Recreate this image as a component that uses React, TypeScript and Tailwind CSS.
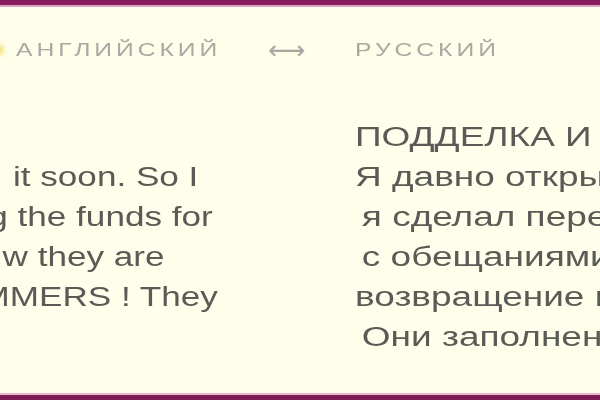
export default function App() {
  const leftLines = [
    { text: 'it soon. So I', cls: 'ml-[10px]' },
    { text: 'g the funds for', cls: '-ml-[9px]' },
    { text: 'w they are', cls: 'ml-[2px]' },
    { text: 'MMERS ! They', cls: '-ml-[15px]' },
  ];
  const rightLines = [
    { text: 'ПОДДЕЛКА И МОШЕННИКИ', cls: '' },
    { text: 'Я давно открыл счет в этой компании,', cls: '' },
    { text: 'я сделал перевод средств', cls: 'pl-[5px]' },
    { text: 'с обещаниями на', cls: 'pl-[5px]' },
    { text: 'возвращение моих денег.', cls: '' },
    { text: 'Они заполнены', cls: 'pl-[5px]' },
  ];

  return (
    <div className="w-[600px] h-[400px] flex flex-col bg-[#fefeea] overflow-hidden font-['Liberation_Sans',Arial,sans-serif]">
      <div className="h-[5px] bg-[#8a1b5c]" />
      <div className="h-[2px] bg-[#d9a6bf]" />

      <div className="flex items-center h-[56px] mt-[15px] text-[#a9a9a4] text-[19px] tracking-[0.16em]">
        <div className="w-[268px] flex items-center">
          <span className="-ml-[6px] w-[10px] h-[10px] rounded-full bg-[#f3e27a] blur-[2px]" />
          <span className="ml-[12px] inline-block origin-left scale-x-[1.3]">АНГЛИЙСКИЙ</span>
        </div>
        <div className="w-[87px] text-[26px] tracking-normal leading-none font-['DejaVu_Sans',sans-serif]">⟷</div>
        <div className="inline-block origin-left scale-x-[1.3]">РУССКИЙ</div>
      </div>

      <div className="flex flex-1 text-[27px] leading-[40px] text-[#5a5a56] whitespace-nowrap mt-[39px]">
        <div className="w-[355px] overflow-hidden pt-[40px]">
          <div className="flex flex-col origin-left scale-x-[1.3]">
            {leftLines.map((l) => (
              <div key={l.text} className={l.cls}>
                {l.text}
              </div>
            ))}
          </div>
        </div>
        <div className="flex-1 overflow-hidden">
          <div className="flex flex-col origin-left scale-x-[1.37]">
            {rightLines.map((l) => (
              <div key={l.text} className={l.cls}>
                {l.text}
              </div>
            ))}
          </div>
        </div>
      </div>

      <div className="h-[2px] bg-[#e7b9cf]" />
      <div className="h-[5px] bg-[#7e1c55]" />
    </div>
  );
}
